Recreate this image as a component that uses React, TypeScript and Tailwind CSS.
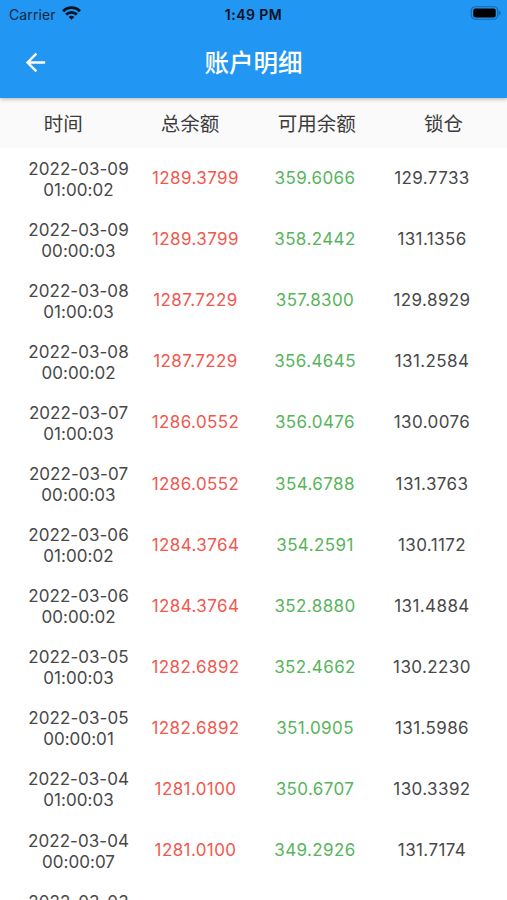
const rows: [string, string, string, string, string][] = [
  ['2022-03-09', '01:00:02', '1289.3799', '359.6066', '129.7733'],
  ['2022-03-09', '00:00:03', '1289.3799', '358.2442', '131.1356'],
  ['2022-03-08', '01:00:03', '1287.7229', '357.8300', '129.8929'],
  ['2022-03-08', '00:00:02', '1287.7229', '356.4645', '131.2584'],
  ['2022-03-07', '01:00:03', '1286.0552', '356.0476', '130.0076'],
  ['2022-03-07', '00:00:03', '1286.0552', '354.6788', '131.3763'],
  ['2022-03-06', '01:00:02', '1284.3764', '354.2591', '130.1172'],
  ['2022-03-06', '00:00:02', '1284.3764', '352.8880', '131.4884'],
  ['2022-03-05', '01:00:03', '1282.6892', '352.4662', '130.2230'],
  ['2022-03-05', '00:00:01', '1282.6892', '351.0905', '131.5986'],
  ['2022-03-04', '01:00:03', '1281.0100', '350.6707', '130.3392'],
  ['2022-03-04', '00:00:07', '1281.0100', '349.2926', '131.7174'],
];

export default function App() {
  return (
    <div className="flex h-[900px] w-[507px] flex-col overflow-hidden bg-white font-['Inter','Noto_Sans_CJK_SC',sans-serif]">
      <header className="relative z-10 h-[98px] shrink-0 bg-[#2196f3] shadow-[0_1px_4px_rgba(0,0,0,0.3)]">
        <div className="grid h-[28px] grid-cols-3 items-center text-[14px] text-[#10283d]">
          <div className="flex items-center gap-[6px] pl-[9px]">
            <span className="tracking-[0.1px]">Carrier</span>
            <svg className="-mt-[2px]" width="19" height="14" viewBox="0 0 19 14" fill="none" stroke="#04121f" strokeWidth="2.8">
              <path d="M1.1 5.3C5.6.5 13.4.5 17.9 5.3M4.1 8.6c3-3 7.8-3 10.8 0" />
              <path d="M9.5 13.8 6.7 11a4 4 0 0 1 5.6 0Z" fill="#04121f" stroke="none" />
            </svg>
          </div>
          <div className="text-center text-[14px] font-semibold tracking-[0.45px] text-[#03101b]">1:49 PM</div>
          <div className="flex justify-end pr-[6px]">
            <svg className="-mt-[2px]" width="31" height="14" viewBox="0 0 31 14">
              <rect x="1.25" y=".75" width="26.5" height="12.5" rx="4" fill="none" stroke="#1869aa" strokeWidth="1.2" />
              <rect x="3.3" y="2.5" width="22.4" height="9" rx="2" fill="#000" />
              <path d="M28.7 4.5q2 .8 2 2.5t-2 2.5Z" fill="#1869aa" />
            </svg>
          </div>
        </div>
        <div className="grid h-[68px] grid-cols-[70px_1fr_70px] items-center">
          <svg className="ml-[21px]" width="29" height="29" viewBox="0 0 24 24" fill="#fff">
            <path d="M20 11H7.83l5.59-5.59L12 4l-8 8 8 8 1.41-1.41L7.83 13H20v-2z" />
          </svg>
          <h1 className="pt-[2px] text-center text-[24.5px] font-medium text-white">账户明细</h1>
        </div>
      </header>
      <div className="grid h-[50px] shrink-0 grid-cols-4 items-center bg-[#fafafa] pt-[4px] text-center text-[19.5px] text-[#3c3c3c]">
        <span>时间</span>
        <span>总余额</span>
        <span>可用余额</span>
        <span>锁仓</span>
      </div>
      <main className="text-center text-[17px] leading-[21px] tracking-[0.4px] text-[#484848]">
        {rows.map(([date, time, total, available, locked]) => (
          <div key={date + time} className="grid h-[61.1px] grid-cols-[117px_117px_122px_112px] items-center pl-[20px]">
            <div className="pt-[2px] tracking-[0.05px]">
              {date}
              <br />
              {time}
            </div>
            <span className="text-[#f1584e]">{total}</span>
            <span className="text-[#58b45c]">{available}</span>
            <span>{locked}</span>
          </div>
        ))}
        <div className="ml-[20px] w-[117px] pt-[11px] tracking-[0.05px]">2022-03-03</div>
      </main>
    </div>
  );
}
